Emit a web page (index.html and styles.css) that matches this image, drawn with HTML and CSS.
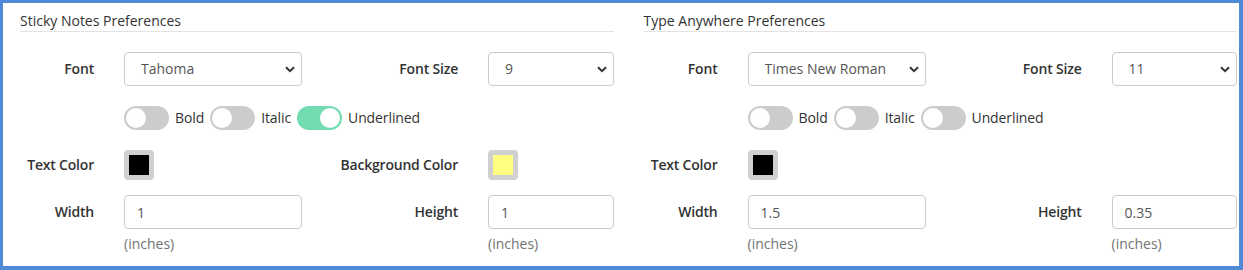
FILE: index.html
```html
<!DOCTYPE html>
<html>
<head>
<meta charset="utf-8">
<link rel="stylesheet" href="styles.css">
</head>
<body>
<div class="frame">
  <section class="panel">
    <h2 class="panel-title">Sticky Notes Preferences</h2>
    <div class="form-row row-select">
      <label class="lbl">Font</label>
      <div class="select-wrap">
        <select class="ctl"><option>Tahoma</option></select>
        <svg class="chev" width="10" height="7" viewBox="0 0 10 7"><path d="M1 1.2 L5 5.2 L9 1.2" fill="none" stroke="#333" stroke-width="2"/></svg>
      </div>
      <label class="lbl">Font Size</label>
      <div class="select-wrap">
        <select class="ctl"><option>9</option></select>
        <svg class="chev" width="10" height="7" viewBox="0 0 10 7"><path d="M1 1.2 L5 5.2 L9 1.2" fill="none" stroke="#333" stroke-width="2"/></svg>
      </div>
    </div>
    <div class="form-row row-toggles">
      <div class="toggles">
        <span class="switch"><span class="knob"></span></span><span class="tlabel">Bold</span>
        <span class="switch"><span class="knob"></span></span><span class="tlabel">Italic</span>
        <span class="switch on"><span class="knob"></span></span><span class="tlabel">Underlined</span>
      </div>
    </div>
    <div class="form-row row-color">
      <label class="lbl">Text Color</label>
      <div><span class="swatch"><span class="swatch-fill black"></span></span></div>
      <label class="lbl">Background Color</label>
      <div><span class="swatch"><span class="swatch-fill yellow"></span></span></div>
    </div>
    <div class="form-row row-size">
      <label class="lbl">Width</label>
      <input class="ctl" type="text" value="1">
      <label class="lbl">Height</label>
      <input class="ctl" type="text" value="1">
      <span></span>
      <span class="help">(inches)</span>
      <span></span>
      <span class="help">(inches)</span>
    </div>
  </section>
  <section class="panel">
    <h2 class="panel-title">Type Anywhere Preferences</h2>
    <div class="form-row row-select">
      <label class="lbl">Font</label>
      <div class="select-wrap">
        <select class="ctl"><option>Times New Roman</option></select>
        <svg class="chev" width="10" height="7" viewBox="0 0 10 7"><path d="M1 1.2 L5 5.2 L9 1.2" fill="none" stroke="#333" stroke-width="2"/></svg>
      </div>
      <label class="lbl">Font Size</label>
      <div class="select-wrap">
        <select class="ctl"><option>11</option></select>
        <svg class="chev" width="10" height="7" viewBox="0 0 10 7"><path d="M1 1.2 L5 5.2 L9 1.2" fill="none" stroke="#333" stroke-width="2"/></svg>
      </div>
    </div>
    <div class="form-row row-toggles">
      <div class="toggles">
        <span class="switch"><span class="knob"></span></span><span class="tlabel">Bold</span>
        <span class="switch"><span class="knob"></span></span><span class="tlabel">Italic</span>
        <span class="switch"><span class="knob"></span></span><span class="tlabel">Underlined</span>
      </div>
    </div>
    <div class="form-row row-color">
      <label class="lbl">Text Color</label>
      <div><span class="swatch"><span class="swatch-fill black"></span></span></div>
    </div>
    <div class="form-row row-size">
      <label class="lbl">Width</label>
      <input class="ctl" type="text" value="1.5">
      <label class="lbl">Height</label>
      <input class="ctl" type="text" value="0.35">
      <span></span>
      <span class="help">(inches)</span>
      <span></span>
      <span class="help">(inches)</span>
    </div>
  </section>
</div>
</body>
</html>
```
FILE: styles.css
```css
* { box-sizing: border-box; }
html, body { margin: 0; padding: 0; background: #fff; }
body {
  font-family: "Open Sans", "Liberation Sans", sans-serif;
  font-size: 14px;
  line-height: 20px;
  color: #333;
}
.frame {
  width: 1243px;
  height: 270px;
  border-style: solid;
  border-color: #4f8ad6;
  border-width: 3px 4px 4px 3px;
  padding: 0 2px 0 17px;
  display: grid;
  grid-template-columns: 1fr 1fr;
  column-gap: 30px;
  overflow: hidden;
}
.panel { min-width: 0; }
.panel-title {
  margin: 8px 0 0;
  font-size: 14px;
  font-weight: 400;
  line-height: 20px;
  color: #333;
  border-bottom: 1px solid #e3e3e3;
}
.form-row {
  display: grid;
  grid-template-columns: 74px 178px 126px 1fr;
  column-gap: 30px;
  align-items: center;
}
.row-select { margin-top: 20px; }
.row-toggles { margin-top: 20px; }
.row-color { margin-top: 20px; }
.row-size { margin-top: 15px; row-gap: 5px; }
.lbl {
  font-weight: 600;
  letter-spacing: -0.2px;
  text-align: right;
  white-space: nowrap;
  color: #333;
}
.ctl {
  display: block;
  width: 100%;
  height: 34px;
  padding: 6px 12px;
  font-family: inherit;
  font-size: 14px;
  line-height: 20px;
  color: #555;
  background: #fff;
  border: 1px solid #ccc;
  border-radius: 4px;
  outline: none;
}
select.ctl {
  appearance: none;
  -webkit-appearance: none;
  padding-left: 16px;
}
.select-wrap { position: relative; }
.chev {
  position: absolute;
  right: 7px;
  top: 14px;
  pointer-events: none;
}
.toggles {
  grid-column: 2 / 5;
  display: flex;
  align-items: center;
  gap: 6px;
  height: 24px;
}
.switch {
  display: inline-flex;
  align-items: center;
  width: 45px;
  height: 24px;
  border-radius: 12px;
  background: #ccc;
  padding: 2px;
}
.switch.on { background: #72dbb0; justify-content: flex-end; }
.knob {
  width: 20px;
  height: 20px;
  border-radius: 50%;
  background: #fff;
}
.tlabel { color: #333; letter-spacing: -0.1px; }
.swatch {
  display: block;
  width: 30px;
  height: 30px;
  padding: 5px;
  border-radius: 4px;
  background: #d0d0d0;
}
.swatch-fill { display: block; width: 20px; height: 20px; }
.black { background: #000; }
.yellow { background: #ffff80; }
.help { color: #737373; }
```
